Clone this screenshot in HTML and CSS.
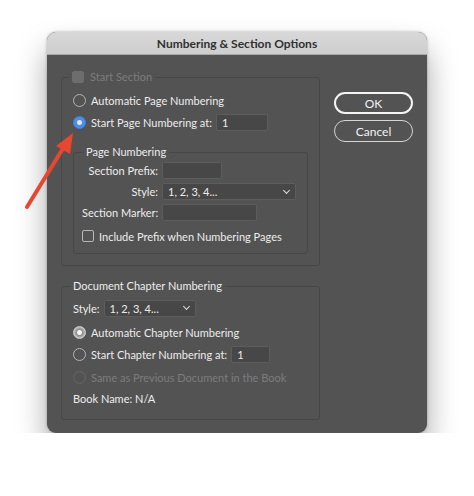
FILE: index.html
```html
<!DOCTYPE html>
<html lang="en">
<head>
    <meta charset="UTF-8">
    <meta name="viewport" content="width=device-width, initial-scale=1.0">
    <title>Numbering &amp; Section Options</title>
    <link rel="stylesheet" href="styles.css">
</head>
<body>
    <div class="dialog">
        <div class="title-bar">Numbering &amp; Section Options</div>
        <div class="dialog-body">
            <div class="main-col">
                <fieldset class="group">
                    <legend class="disabled"><span class="check checked-off"></span>Start Section</legend>
                    <div class="row"><span class="radio"></span>Automatic Page Numbering</div>
                    <div class="row"><span class="radio radio-on"></span>Start Page Numbering at:<span class="field field-start">1</span></div>

                    <fieldset class="group inner">
                        <legend>Page Numbering</legend>
                        <div class="grid">
                            <label>Section Prefix:</label>
                            <span class="field field-prefix"></span>
                            <label>Style:</label>
                            <span class="select select-wide">1, 2, 3, 4...<span class="chev"></span></span>
                            <label>Section Marker:</label>
                            <span class="field field-marker"></span>
                        </div>
                        <div class="row row-check"><span class="check"></span>Include Prefix when Numbering Pages</div>
                    </fieldset>
                </fieldset>

                <fieldset class="group chapter">
                    <legend>Document Chapter Numbering</legend>
                    <div class="row row-style">Style:<span class="select select-small">1, 2, 3, 4...<span class="chev"></span></span></div>
                    <div class="row"><span class="radio radio-gray"></span>Automatic Chapter Numbering</div>
                    <div class="row"><span class="radio"></span>Start Chapter Numbering at:<span class="field field-chapter">1</span></div>
                    <div class="row row-prev disabled"><span class="radio radio-off"></span>Same as Previous Document in the Book</div>
                    <div class="row row-book">Book Name: N/A</div>
                </fieldset>
            </div>
            <div class="buttons">
                <button class="btn btn-ok">OK</button>
                <button class="btn">Cancel</button>
            </div>
        </div>
    </div>

    <svg class="arrow" width="90" height="100" viewBox="0 125 90 100">
        <line x1="27" y1="207" x2="62" y2="150" stroke="#e8472f" stroke-width="4" stroke-linecap="round"/>
        <polygon points="73,133 56,146 70,154" fill="#e8472f"/>
    </svg>
</body>
</html>
```

FILE: styles.css
```css
body {
    margin: 0;
    padding: 32px 47px 0;
    background: #fff;
    font-family: Lato, "Open Sans", sans-serif;
    font-size: 11px;
    color: #ededed;
}
.dialog {
    width: 380px;
    height: 401px;
    background: #535353;
    border-radius: 9px;
    overflow: hidden;
    box-shadow: 0 18px 30px rgba(0, 0, 0, 0.35), 0 0 3px rgba(0, 0, 0, 0.3);
}
.title-bar {
    height: 22px;
    line-height: 23px;
    background: linear-gradient(#d8d8d8, #cecece);
    border-bottom: 1px solid #a9a9a9;
    text-align: center;
    font-weight: bold;
    font-size: 12px;
    color: #303030;
}
.dialog-body {
    display: flex;
    padding: 15px 14px 0 14px;
}
.main-col {
    width: 259px;
}
.group {
    margin: 0;
    padding: 5px 11px 11px;
    border: 1px solid #474747;
    border-radius: 3px;
}
.group legend {
    padding: 0 3px;
    margin-left: -4px;
    height: 14px;
    line-height: 14px;
    display: flex;
    align-items: center;
}
.disabled {
    color: #7c7c7c;
}
.row {
    height: 22px;
    display: flex;
    align-items: center;
    white-space: nowrap;
}
.inner {
    margin-top: 12px;
    padding: 0 8px 6px;
}
.inner legend {
    margin-left: 1px;
}
.grid {
    display: grid;
    grid-template-columns: 76px auto;
    column-gap: 4px;
    row-gap: 4px;
    align-items: center;
    padding-top: 3px;
}
.grid label {
    text-align: right;
    white-space: nowrap;
}
.row-check {
    margin-top: 4px;
}
.chapter {
    margin-top: 13px;
    padding: 4px 11px 11px;
}
.chapter legend {
    margin-left: -3px;
}
.chapter .row-style {
    margin-bottom: 2px;
}
.chapter .row-prev {
    margin-top: 1px;
}
.chapter .row-book {
    height: 20px;
}
.radio {
    width: 11px;
    height: 11px;
    border: 1px solid #b4b4b4;
    border-radius: 50%;
    margin-right: 5px;
    flex-shrink: 0;
}
.radio-on {
    border-color: #3d86e8;
    background: radial-gradient(circle, #dbe8fb 0 2px, #4c8ee6 3px);
}
.radio-gray {
    border-color: #d0d0d0;
    background: radial-gradient(circle, #f4f4f4 0 2px, #8c8c8c 3px, #b5b5b5 5px);
}
.radio-off {
    border-color: #676767;
}
.check {
    width: 10px;
    height: 10px;
    border: 1px solid #b8b8b8;
    border-radius: 2px;
    margin-right: 5px;
    flex-shrink: 0;
}
.checked-off {
    background: #6d6d6d;
    border-color: #6d6d6d;
    margin-right: 6px;
}
.field, .select {
    height: 15px;
    line-height: 15px;
    background: #474747;
    border: 1px solid #5d5d5d;
    border-radius: 2px;
    padding-left: 5px;
    box-sizing: content-box;
}
.field-start {
    width: 45px;
    margin-left: 4px;
}
.field-prefix {
    width: 53px;
}
.field-marker {
    width: 88px;
}
.field-chapter {
    width: 32px;
    margin-left: 4px;
}
.select {
    display: flex;
    justify-content: space-between;
    align-items: center;
    padding-right: 6px;
}
.select-wide {
    width: 121px;
}
.select-small {
    width: 79px;
    margin-left: 4px;
}
.chev {
    width: 4px;
    height: 4px;
    border-right: 1.5px solid #ddd;
    border-bottom: 1.5px solid #ddd;
    transform: rotate(45deg);
    margin-top: -3px;
}
.buttons {
    margin-left: 14px;
    padding-top: 22px;
    display: flex;
    flex-direction: column;
    gap: 6px;
}
.btn {
    width: 79px;
    height: 22px;
    border: 1.5px solid #d4d4d4;
    border-radius: 11px;
    background: transparent;
    color: #f2f2f2;
    font-family: inherit;
    font-size: 12px;
    padding: 0;
}
.btn-ok {
    border: 2px solid #f4f4f4;
}
.arrow {
    position: absolute;
    left: 0;
    top: 125px;
}
```
